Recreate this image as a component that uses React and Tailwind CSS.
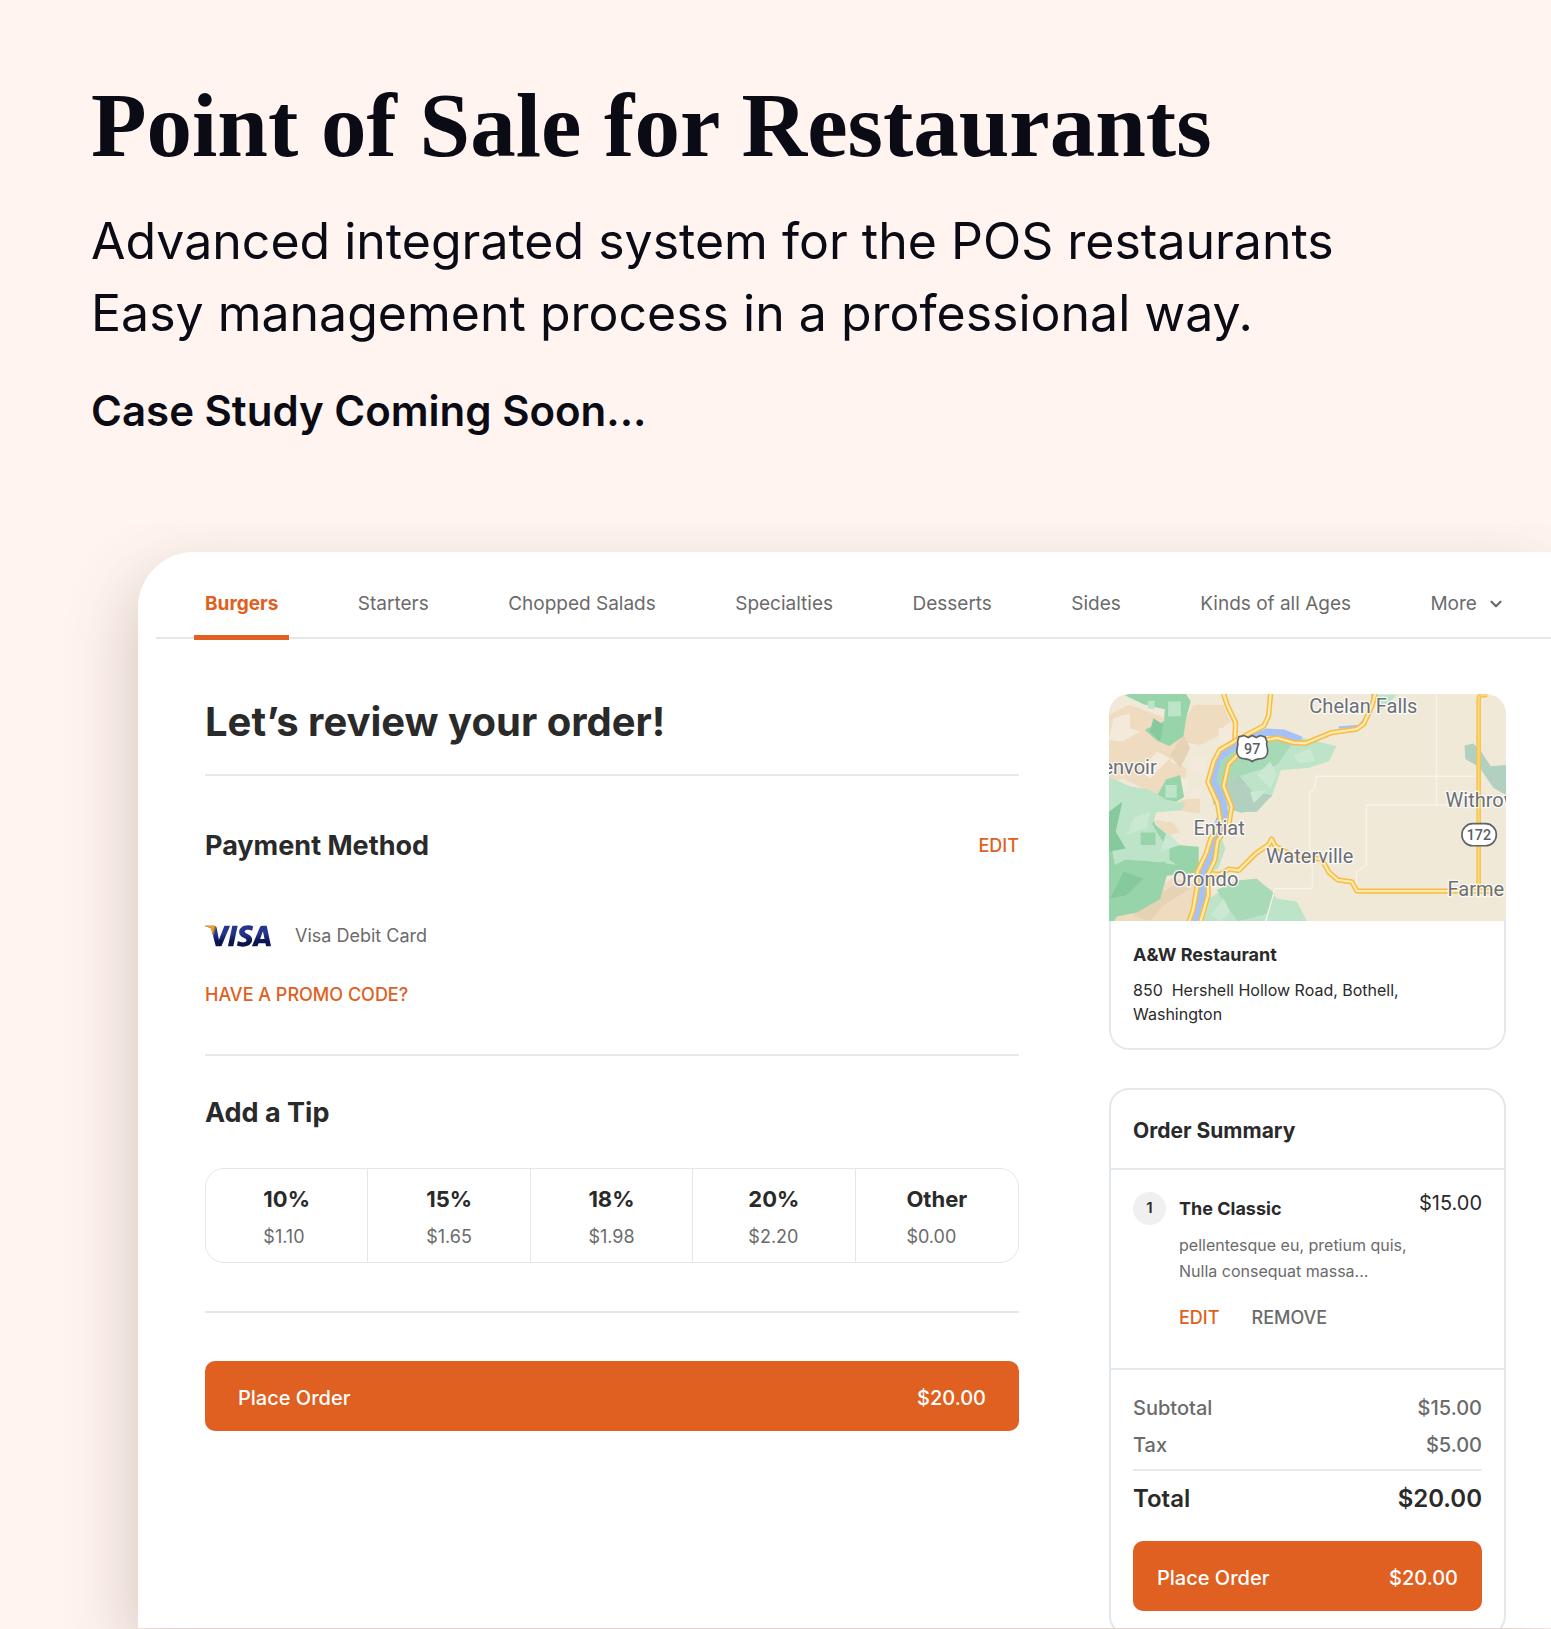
import React, { useState } from 'react'
import { ChevronDown } from 'lucide-react'
import { SiVisa } from 'react-icons/si'

const tabs = ['Burgers', 'Starters', 'Chopped Salads', 'Specialties', 'Desserts', 'Sides', 'Kinds of all Ages']

const tips = [
  { label: '10%', amount: '$1.10' },
  { label: '15%', amount: '$1.65' },
  { label: '18%', amount: '$1.98' },
  { label: '20%', amount: '$2.20' },
  { label: 'Other', amount: '$0.00' },
]

function VisaLogo() {
  return (
    <span className="relative block h-[22px] w-[66px]">
      <svg className="absolute h-0 w-0" aria-hidden="true">
        <defs>
          <linearGradient id="visaBlue" x1="0" y1="0" x2="0" y2="1">
            <stop offset="0.4" stopColor="#26348b" />
            <stop offset="0.75" stopColor="#0b1650" />
          </linearGradient>
          <linearGradient id="visaGold" x1="0" y1="0" x2="1" y2="0.1">
            <stop offset="0.14" stopColor="#f6a01a" />
            <stop offset="0.19" stopColor="#f6a01a" stopOpacity="0" />
          </linearGradient>
        </defs>
      </svg>
      <SiVisa className="absolute inset-0 h-full w-full" viewBox="0 8 24 8" fill="url(#visaBlue)" title="Visa" />
      <SiVisa className="absolute inset-0 h-full w-full" viewBox="0 8 24 8" fill="url(#visaGold)" aria-hidden="true" />
    </span>
  )
}

function Road({ d }) {
  return (
    <g fill="none" strokeLinejoin="round">
      <path d={d} stroke="#f5bd45" strokeWidth="16" />
      <path d={d} stroke="#fde9ae" strokeWidth="7" />
    </g>
  )
}

function MapView() {
  return (
    <svg viewBox="27 27 1189 681" preserveAspectRatio="xMidYMid slice" className="block h-[227px] w-full" role="img" aria-label="Map of the restaurant area">
      <rect x="27" y="27" width="1189" height="681" fill="#f1e9d8" />

      {/* hills */}
      <g fill="#eedbc0">
        <path d="M27 90l60-30 110 40 20 60-60 30-40 60 30 40-20 20-60-30-40 20z" />
        <path d="M140 180l80-10 60-110 60 10 20 80-60 30-60-10-30 60 50 20-10 60-50-10-30 30-60-30z" />
        <path d="M290 60h80l20 50-50 40-60-10z" />
        <path d="M240 345l60-5v45l-60-8z" />
        <path d="M160 405l60 8 20 30-40 8z" />
        <path d="M27 708l110-70 80-60 70 20-20 110z" />
      </g>
      <g fill="#e6d3b6">
        <path d="M100 690l60-50 60-40 50 10-80 50-40 48z" />
        <path d="M210 210l40-60 20 40-30 60z" />
      </g>
      <g fill="#f4eadb">
        <path d="M40 100l50-15v45l30 10-50 30-43-5z" />
        <path d="M120 260l50-60 40 20-60 60z" />
        <path d="M230 280h35v40h-35zM270 215h45v50h-45zM270 310h30v30h-30zM355 130h40v45h-40z" />
      </g>

      {/* forests */}
      <g fill="#98d4a9">
        <path d="M92 27h165l15 22-14 52-8 52-42 30-38-16-36-32 58-26 2-36-62-14-58-28z" />
        <path d="M172 330l26-46 42-14 12 66-50 30-30-5z" />
        <path d="M27 340l110 20 30 60 70 60 58 6v76l-95 10-20 70-70 40-60 12-23 40z" />
      </g>
      <g fill="#bde3c8">
        <path d="M27 276l62 28 60 10 50 30 56 10-10 22-76 6-12 36 30 50 78 36 28 22-60 14-90-12-68-4-30 16-18-90z" />
        <path d="M144 48h20v24h-20zM204 50h38v44h-38zM196 300h34v38h-34z" />
        <path d="M500 165l90-10 118 28-22 46-62 20-82 6-28 80-90 50-70-30z" />
        <path d="M830 30h60l-60 55z" />
        <path d="M360 450l16 40-22 60-20 10z" />
      </g>
      <g fill="#98d4a9">
        <path d="M122 442h44v38h-44zM208 485h87v78l-60-20-27-18z" />
        <path d="M27 560l60-20 110-10-20 60-70 50-60 20-20 20z" />
      </g>
      <g fill="#86c99c">
        <path d="M27 380l40-30-20 90 30 50-50 10z" />
        <path d="M70 560l60 20-50 50-50 10z" />
        <path d="M160 100l30 20-10 50-30-30z" />
      </g>
      <path d="M310 708l20-70 80-50 60-8 60 60 60 10 30 58z" fill="#bde3c8" />
      <path d="M350 614l60-28 58-5 56 44-20 60-90 23-40-50z" fill="#a9dab7" />
      <path d="M330 300l50-110 110-22 90 2-50 70-70 20-60 20-20 60-40 20z" fill="#a6d9b6" />
      <path d="M372 300l44-30 40 50 60 10-46 50-50 2-30-8z" fill="#b2d0bf" />
      <g fill="#cbe9d2">
        <path d="M470 270l40-40 20 40-20 40zM580 210l50-20 14 40-50 4zM450 320l50-6-40 40z" />
        <path d="M100 400l50-20-10 50-60 20zM200 440l40 40-60 20zM330 690l40-50 20 40-30 28z" />
      </g>
      <path d="M1092 182l26-6 20 18 32 50 46-4v90l-38-22-42-62-42-24z" fill="#b2d0bf" />

      {/* county lines */}
      <g fill="none" stroke="#f8f3ea" strokeWidth="4">
        <path d="M1008 27v330M1130 274H648l-6 40-14 6v190l8 40v60H524l-8 30-20 68" />
        <path d="M1040 360H798v180l-30 20v50" />
      </g>

      {/* river */}
      <g fill="none" stroke="#a4c2f8">
        <path d="M602 166L550 145L500 142L440 165L392 190L352 222L337 285L366 345L376 400" strokeWidth="22" />
        <path d="M366 400L342 470L326 520L304 575L305 625L285 712" strokeWidth="34" />
        <path d="M715 128L777 124L813 74L817 27" strokeWidth="8" />
      </g>

      <Road d="M370 27l12 36 24 50-2 54" />
      <Road d="M511 27L505 93L491 123L405 168L359 195L341 229L323 291L352 355L362 415L332 460L318 505L292 560L290 610L280 670L266 712" />
      <Road d="M824 27L816 59L790 117L768 133L694 143L616 175L578 173L530 159L488 167L430 190L385 238L370 303L394 365L386 420L352 468L344 525L322 570L324 630L300 712" />
      <Road d="M336 566l22 2 28-16 30 4 50-50 40-28 8-16 10 20 50 28 90 12 22 40 26 22 42 6 16 28h440" />
      <path d="M1160 30c-20 0-26 2-26 14v566" fill="none" stroke="#f7c24b" strokeWidth="14" />
      <path d="M1160 30c-20 0-26 2-26 14v566" fill="none" stroke="#fbd77a" strokeWidth="6" />

      {/* route shields */}
      <path d="M416 156l16-4 12 6 12-6 12 6 12-6 14 4 6 14c-4 10 4 20 2 32-2 18-16 20-26 20-10 2-16 4-20 8-4-4-10-6-20-8-10 0-24-2-26-20-2-12 6-22 2-32z" fill="#fff" stroke="#5f6368" strokeWidth="5" />
      <rect x="1084" y="416" width="103" height="66" rx="32" fill="#fff" stroke="#5f6368" strokeWidth="5" />
      <g fontFamily="Roboto, sans-serif" fontSize="43" fontWeight="500" fill="#5b5e63" textAnchor="middle">
        <text x="456" y="208">97</text>
        <text x="1135" y="465">172</text>
      </g>

      <g fontFamily="Roboto, sans-serif" fontSize="60" fill="#6b6f76" stroke="#fff" strokeOpacity="0.8" strokeWidth="8" strokeLinejoin="round" paintOrder="stroke">
        <text x="627" y="85">Chelan Falls</text>
        <text x="170" y="268" textAnchor="end">envoir</text>
        <text x="1035" y="366">Withrow</text>
        <text x="280" y="449">Entiat</text>
        <text x="497" y="534">Waterville</text>
        <text x="218" y="602">Orondo</text>
        <text x="1041" y="632">Farme</text>
      </g>
    </svg>
  )
}

function PlaceOrder({ className }) {
  return (
    <button type="button" className={`flex h-[70px] w-full items-center justify-between rounded-[10px] bg-[#df6020] pt-1 text-[20px] font-medium text-white ${className}`}>
      <span>Place Order</span>
      <span>$20.00</span>
    </button>
  )
}

export default function App() {
  const [active, setActive] = useState('Burgers')
  const [tip, setTip] = useState(null)

  return (
    <div className="min-h-screen overflow-hidden bg-[#fff4ef] font-['Inter',sans-serif] text-[#2a2a2b]">
      <header className="px-[91px] pt-[78px] pb-[84px] text-[#0a0b14]">
        <h1 className="font-['Liberation_Serif',serif] text-[91px] leading-[96px] font-bold">Point of Sale for Restaurants</h1>
        <p className="mt-[31px] text-[50px] leading-[72px]">
          Advanced integrated system for the POS restaurants
          <br />
          Easy management process in a professional way.
        </p>
        <p className="mt-8 text-[42px] leading-[60px] font-semibold">Case Study Coming Soon...</p>
      </header>

      <div className="overflow-hidden pt-[27px] pb-px pl-[138px]">
        <div className="rounded-tl-[56px] shadow-[-8px_24px_64px_#64504640]">
          <div className="overflow-hidden rounded-tl-[56px] bg-white">
            <nav className="ml-[18px] flex justify-between border-b-2 border-[#e3e8ed] pt-10 pr-[46px] pb-[21px] pl-[49px] text-[19px] leading-6 text-[#6b6b6b]">
              {tabs.map((tab) => (
                <button
                  key={tab}
                  type="button"
                  onClick={() => setActive(tab)}
                  className={
                    tab === active
                      ? 'relative font-bold text-[#df6020] after:absolute after:-inset-x-[11px] after:-bottom-6 after:h-[5px] after:bg-[#df6020]'
                      : 'relative'
                  }
                >
                  {tab}
                </button>
              ))}
              <button type="button" className="flex items-center gap-2.5">
                More
                <ChevronDown size={18} strokeWidth={3} />
              </button>
            </nav>

            <main className="flex gap-[90px] pt-[55px] pr-[45px] pl-[67px]">
              <div className="min-w-0 flex-1 pt-1">
                <h2 className="text-[40px] leading-[48px] font-bold">Let’s review your order!</h2>
                <hr className="mt-7 border-t-2 border-[#e3e8ed]" />

                <div className="mt-[54px] flex items-center justify-between">
                  <h3 className="text-[27px] leading-8 font-bold">Payment Method</h3>
                  <button type="button" className="text-[18px] leading-6 font-medium text-[#df6020]">EDIT</button>
                </div>
                <div className="mt-[62px] flex items-center gap-6">
                  <VisaLogo />
                  <span className="text-[18px] leading-6 text-[#6b6b6b]">Visa Debit Card</span>
                </div>
                <button type="button" className="mt-[35px] block text-[18px] leading-6 font-medium text-[#df6020]">HAVE A PROMO CODE?</button>
                <hr className="mt-[47px] border-t-2 border-[#e3e8ed]" />

                <h3 className="mt-[41px] text-[27px] leading-8 font-bold">Add a Tip</h3>
                <div className="mt-[39px] grid h-[95px] grid-cols-5 divide-x divide-[#e6e6e6] rounded-[19px] border border-[#e6e6e6]">
                  {tips.map((t) => (
                    <button key={t.label} type="button" aria-pressed={tip === t.label} onClick={() => setTip(t.label)} className="flex items-center justify-center pt-1">
                      <span className="block text-left">
                        <span className="block text-[22px] leading-[38px] font-bold">{t.label}</span>
                        <span className="block text-[18px] leading-[38px] text-[#6b6b6b]">{t.amount}</span>
                      </span>
                    </button>
                  ))}
                </div>
                <hr className="mt-12 border-t-2 border-[#e3e8ed]" />
                <PlaceOrder className="mt-12 px-[33px]" />
              </div>

              <aside className="w-[397px] shrink-0">
                <section className="overflow-hidden rounded-[20px]">
                  <MapView />
                  <div className="rounded-b-[20px] border-2 border-t-0 border-[#e3e8ed] px-[22px] pt-[22px] pb-[22px]">
                    <h4 className="text-[18px] leading-6 font-bold">A&amp;W Restaurant</h4>
                    <p className="mt-[11px] text-[16px] leading-6">
                      850&nbsp; Hershell Hollow Road, Bothell,
                      <br />
                      Washington
                    </p>
                  </div>
                </section>

                <section className="mt-[38px] -mb-2 rounded-[20px] border-2 border-[#e3e8ed]">
                  <h4 className="px-[22px] pt-[25px] pb-[21px] text-[21px] leading-8 font-bold">Order Summary</h4>
                  <div className="flex gap-[13px] border-y-2 border-[#e3e8ed] px-[22px] pt-[22px] pb-[38px]">
                    <span className="flex h-[33px] w-[33px] items-center justify-center rounded-full bg-[#f0f0f0] text-[15px] font-semibold">1</span>
                    <div className="flex-1">
                      <div className="flex justify-between">
                        <h5 className="text-[18px] leading-[34px] font-bold">The Classic</h5>
                        <span className="text-[20px] leading-[22px]">$15.00</span>
                      </div>
                      <p className="mt-1.5 text-[16px] leading-[26px] text-[#6b6b6b]">
                        pellentesque eu, pretium quis,
                        <br />
                        Nulla consequat massa...
                      </p>
                      <div className="mt-[22px] flex gap-8 text-[18px] leading-6 font-medium">
                        <button type="button" className="text-[#df6020]">EDIT</button>
                        <button type="button" className="text-[#6b6b6b]">REMOVE</button>
                      </div>
                    </div>
                  </div>
                  <div className="px-[22px] pt-[26px] pb-[23px]">
                    <dl className="text-[20px] leading-6 font-medium text-[#6b6b6b]">
                      <div className="flex justify-between">
                        <dt>Subtotal</dt>
                        <dd>$15.00</dd>
                      </div>
                      <div className="mt-[13px] flex justify-between">
                        <dt>Tax</dt>
                        <dd>$5.00</dd>
                      </div>
                      <div className="mt-3 flex justify-between border-t-2 border-[#e6ebee] pt-3 text-[24px] leading-8 font-semibold text-[#2a2a2b]">
                        <dt>Total</dt>
                        <dd>$20.00</dd>
                      </div>
                    </dl>
                    <PlaceOrder className="mt-[26px] px-6" />
                  </div>
                </section>
              </aside>
            </main>
          </div>
        </div>
      </div>
    </div>
  )
}
